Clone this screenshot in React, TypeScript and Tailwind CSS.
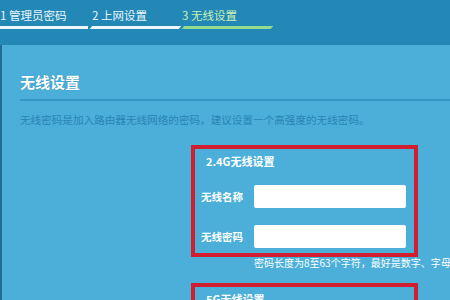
import React from 'react'

const font = { fontFamily: '"Noto Sans CJK SC", "Noto Sans", sans-serif' }

function Steps() {
  return (
    <div className="flex h-[45px] shrink-0 flex-col bg-[#2388b5] pt-[6px]">
      <div className="flex text-[11.5px] leading-[18px]">
        <span className="w-[92px] text-[#eaf6fb]">1 管理员密码</span>
        <span className="w-[90px] text-[#eaf6fb]">2 上网设置</span>
        <span className="text-[#c9f2b4]">3 无线设置</span>
      </div>
      <div className="mt-[2px] flex h-[3px] items-stretch">
        <div className="w-[88px] bg-[#eef8fc]" />
        <div className="ml-[3px] w-[89px] -skew-x-[40deg] bg-[#eef8fc]" />
        <div className="ml-[3px] w-[89px] -skew-x-[40deg] bg-[#94dc8e]" />
      </div>
    </div>
  )
}

function Field({ label }: { label: string }) {
  return (
    <div className="flex items-center">
      <span className="w-[59px] shrink-0 pl-[6px] text-[10.5px] font-bold text-white">{label}</span>
      <div className="h-[23px] w-[152px] rounded-[2px] bg-white" />
    </div>
  )
}

export default function App() {
  return (
    <div className="flex h-[300px] w-[450px] flex-col overflow-hidden bg-[#4bafd9]" style={font}>
      <Steps />
      <div className="flex flex-1 flex-col border-l-2 border-[#1f6f93] pl-[18px] pt-[27px]">
        <h1 className="shrink-0 text-[15px] font-bold leading-[20px] text-white [text-shadow:0_0_1px_#2a7aa0]">无线设置</h1>
        <div className="mt-[7px] h-[2px] shrink-0 bg-[#3397c4]" />
        <p className="mt-[12px] shrink-0 text-[10.6px] leading-[14px] text-[#2a84b4]">
          无线密码是加入路由器无线网络的密码，建议设置一个高强度的无线密码。
        </p>
        <div className="ml-[171px] mt-[18px] flex h-[112px] w-[227px] shrink-0 flex-col border-4 border-[#d21f2f] pt-[5px]">
          <span className="pl-[11px] text-[11px] font-bold leading-[14px] text-white">2.4G无线设置</span>
          <div className="mt-[17px] flex flex-col gap-[17px]">
            <Field label="无线名称" />
            <Field label="无线密码" />
          </div>
        </div>
        <p className="ml-[234px] mt-[-1px] shrink-0 whitespace-nowrap text-[10px] leading-[14px] text-white">
          密码长度为8至63个字符，最好是数字、字母和符号的组合
        </p>
        <div className="ml-[171px] mt-[13px] flex h-[60px] w-[227px] shrink-0 flex-col border-4 border-[#d21f2f] pt-[5px]">
          <span className="pl-[11px] text-[11px] font-bold leading-[14px] text-white">5G无线设置</span>
        </div>
      </div>
    </div>
  )
}
